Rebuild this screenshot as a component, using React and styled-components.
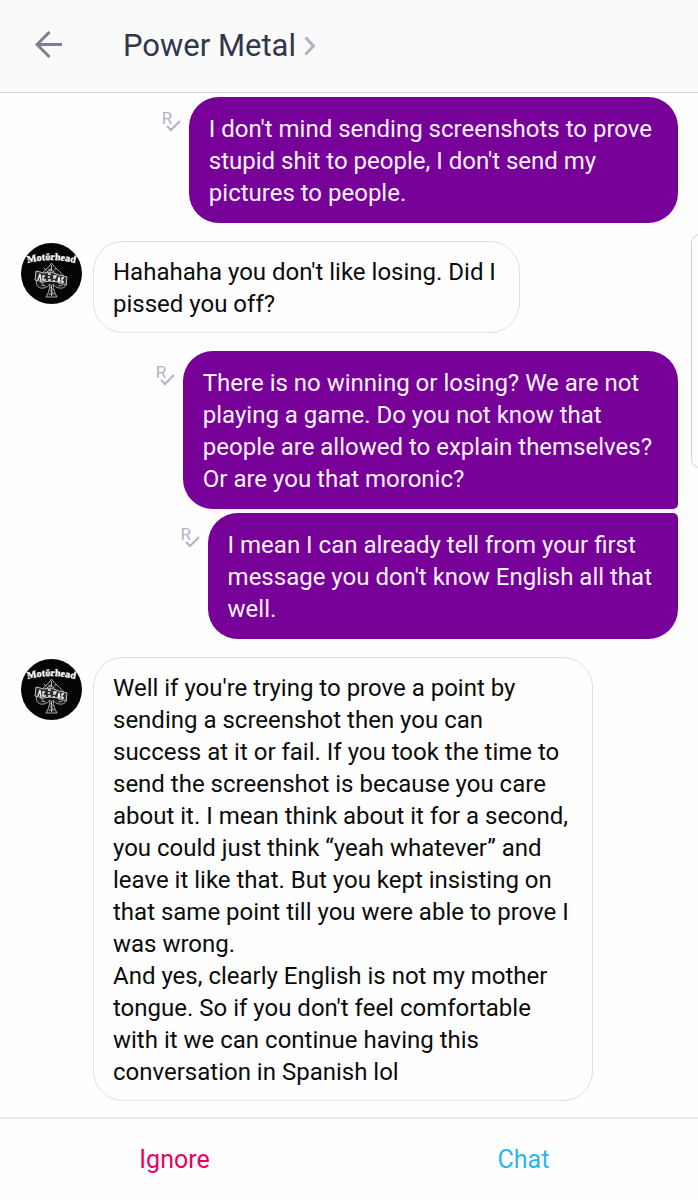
import styled, { createGlobalStyle } from "styled-components";

const messages = [
  {
    id: 1,
    sent: true,
    text: "I don't mind sending screenshots to prove\nstupid shit to people, I don't send my\npictures to people.",
  },
  {
    id: 2,
    text: "Hahahaha you don't like losing. Did I\npissed you off?",
  },
  {
    id: 3,
    sent: true,
    joinsNext: true,
    text: "There is no winning or losing? We are not\nplaying a game. Do you not know that\npeople are allowed to explain themselves?\nOr are you that moronic?",
  },
  {
    id: 4,
    sent: true,
    joinsPrevious: true,
    text: "I mean I can already tell from your first\nmessage you don't know English all that\nwell.",
  },
  {
    id: 5,
    text: "Well if you're trying to prove a point by\nsending a screenshot then you can\nsuccess at it or fail. If you took the time to\nsend the screenshot is because you care\nabout it. I mean think about it for a second,\nyou could just think “yeah whatever” and\nleave it like that. But you kept insisting on\nthat same point till you were able to prove I\nwas wrong.\nAnd yes, clearly English is not my mother\ntongue. So if you don't feel comfortable\nwith it we can continue having this\nconversation in Spanish lol",
  },
];

const BackIcon = () => (
  <svg width="27" height="30" viewBox="0 0 27 30" fill="none" stroke="#7b7f90" strokeWidth="3">
    <path d="M14.500 1 2 13.500 14.500 26M2 13.500h25" />
  </svg>
);

const ChevronIcon = () => (
  <svg width="12" height="20" viewBox="0 0 12 20" fill="none" stroke="#b0b3c6" strokeWidth="3">
    <path d="M1.500 1.500 9.500 10l-8 8.500" />
  </svg>
);

const CheckIcon = () => (
  <svg width="15" height="12" viewBox="0 0 15 12" fill="none" stroke="#b0b3c6" strokeWidth="2">
    <path d="M1 6l4 4L14 1" />
  </svg>
);

const Emblem = () => (
  <svg width="61" height="61" viewBox="0 0 61 61" role="img" aria-label="Motörhead">
    <defs>
      <path id="bandArc" d="M4 21Q30.500 13 57 21" />
    </defs>
    <circle cx="30.500" cy="30.500" r="30.500" fill="#050505" />
    <text
      fill="#fff"
      stroke="#fff"
      strokeWidth="0.300"
      fontFamily="'Liberation Serif', serif"
      fontSize="10"
      fontWeight="700"
      textAnchor="middle"
    >
      <textPath href="#bandArc" startOffset="50%">Motörhead</textPath>
    </text>
    <path
      d="M30.500 20C28 25 18 31 15.500 38c-1 5 3 8 7 7 3 0 5-2 6.500-4-.5 5-1.500 9-4 13h11c-2.500-4-3.500-8-4-13 1.500 2 3.500 4 6.500 4 4 1 8-2 7-7-2-7-12-13-15-18z"
      fill="#161616"
      stroke="#a8a8a8"
    />
    <path
      d="M30.500 22v5m-3-1 6 3m-8 0 5-3m-6 17-4-1m17 1 4-1m-11 0v11m-2-9 4 3m-4 0 4 3m-5 1h6m-14-12 3 2m15 0 3-2m-18-14 3 2m8 0 2-2"
      stroke="#b5b5b5"
      fill="none"
    />
    <path d="M15 28l8 2 7-1 8 3 8 2-1 8-8-3-8-1-7 1-8-2z" fill="#2b2b2b" stroke="#c4c4c4" />
    <path
      d="M17 37l2-6 1 7m4-5h-2v4h3m2-6h3m-3 3h2m-2 3h3m2-4h3l-1 2h-2m2 3h-2m5 1 1-5 1 5m4-4h-2v4h2"
      fill="none"
      stroke="#eee"
      strokeWidth="1.400"
    />
  </svg>
);

const App = () => {
  return (
    <>
      <GlobalStyle />
      <Page>
        <Header>
          <BackButton type="button" aria-label="Back">
            <BackIcon />
          </BackButton>
          <TitleLink href="#profile">
            <Title>Power Metal</Title>
            <ChevronIcon />
          </TitleLink>
        </Header>
        <Messages>
          {messages.map((message) => (
            <Row key={message.id} $sent={message.sent} $joined={message.joinsPrevious}>
              {message.sent ? (
                <Receipt>
                  <span>R</span>
                  <CheckIcon />
                </Receipt>
              ) : (
                <Avatar>
                  <Emblem />
                </Avatar>
              )}
              <Bubble
                $sent={message.sent}
                $joinsNext={message.joinsNext}
                $joinsPrevious={message.joinsPrevious}
              >
                {message.text}
              </Bubble>
            </Row>
          ))}
        </Messages>
        <Footer>
          <ActionButton type="button" $color="#e9005f">Ignore</ActionButton>
          <ActionButton type="button" $color="#2bb5f2">Chat</ActionButton>
        </Footer>
        <EdgeHandle />
      </Page>
    </>
  );
};

export default App;

const GlobalStyle = createGlobalStyle`
  * {
    box-sizing: border-box;
  }

  body {
    margin: 0;
    background-color: #fefefe;
    font-family: Roboto, sans-serif;
  }
`;

const Page = styled.div`
  position: relative;
  display: flex;
  flex-direction: column;
  min-height: 100vh;
  overflow-x: hidden;
`;

const Header = styled.header`
  display: flex;
  align-items: center;
  height: 93px;
  padding: 0 35px;
  gap: 61px;
  background-color: #fafafb;
  border-bottom: 1px solid #d3d7dc;
`;

const BackButton = styled.button`
  display: flex;
  padding: 0;
  border: none;
  background: none;
`;

const TitleLink = styled.a`
  display: flex;
  align-items: center;
  gap: 8px;
  text-decoration: none;
`;

const Title = styled.h1`
  margin: 0;
  font-size: 31px;
  line-height: 36px;
  font-weight: 400;
  color: #32364a;
`;

const Messages = styled.main`
  flex: 1;
  padding: 4px 20px 16px 21px;
`;

const Row = styled.div`
  display: flex;
  align-items: flex-start;
  justify-content: ${({ $sent }) => ($sent ? "flex-end" : "flex-start")};
  gap: ${({ $sent }) => ($sent ? "8px" : "11px")};
  margin-top: ${({ $joined }) => ($joined ? "4px" : "18px")};

  &:first-child {
    margin-top: 0;
  }
`;

const Avatar = styled.div`
  display: flex;
  padding-top: 2px;
`;

const Receipt = styled.div`
  display: flex;
  flex-direction: column;
  align-items: flex-end;
  width: 19px;
  padding-top: 13px;
  color: #b0b3c6;

  span {
    align-self: flex-start;
    font-size: 17px;
    line-height: 16px;
  }

  svg {
    margin-top: -6px;
  }
`;

const Bubble = styled.div`
  padding: ${({ $sent }) => ($sent ? "16px 26px 14px 20px" : "14px 23px 12px 19px")};
  border: ${({ $sent }) => ($sent ? "none" : "1px solid #dfe0e8")};
  border-radius: 30px;
  border-top-right-radius: ${({ $joinsPrevious }) => ($joinsPrevious ? "5px" : "30px")};
  border-bottom-right-radius: ${({ $joinsNext }) => ($joinsNext ? "5px" : "30px")};
  background-color: ${({ $sent }) => ($sent ? "#770099" : "#fefefe")};
  color: ${({ $sent }) => ($sent ? "#fcf4ff" : "#0c0c0c")};
  font-size: 24px;
  line-height: 32px;
  white-space: pre-line;
`;

const Footer = styled.footer`
  display: flex;
  height: 83px;
  border-top: 2px solid #ececee;
`;

const ActionButton = styled.button`
  flex: 1;
  padding: 0;
  border: none;
  background: none;
  font-family: inherit;
  font-size: 25px;
  line-height: 32px;
  color: ${({ $color }) => $color};
`;

const EdgeHandle = styled.div`
  position: absolute;
  top: 234px;
  right: -10px;
  width: 17px;
  height: 234px;
  border: 1px solid #cfcfcf;
  border-radius: 10px;
  background-color: #fefefe;
`;
